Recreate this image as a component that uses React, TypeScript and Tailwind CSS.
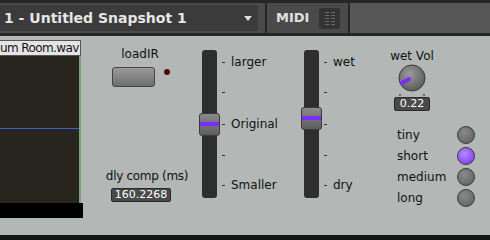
import React from "react";

const font = { fontFamily: '"DejaVu Sans", "Liberation Sans", sans-serif' };

function Slider({ thumbTop, labels }: { thumbTop: number; labels: string[] }) {
  const ticks = [12, 42, 74, 105, 135];
  return (
    <div className="relative h-[150px] w-[95px]">
      <div className="absolute left-[3px] top-0 h-[148px] w-[15px] rounded-[3px] bg-[#2e2e2e]" />
      <div
        className="absolute left-0 h-[23px] w-[21px] rounded-[3px] border border-[#3a3a3a] bg-gradient-to-b from-[#8a8a8a] to-[#5e5e5e]"
        style={{ top: thumbTop }}
      >
        <div className="mt-[8px] h-[4px] w-full bg-[#7b2cff]" />
      </div>
      {ticks.map((t, i) => (
        <React.Fragment key={t}>
          <div className="absolute left-[23px] h-[1px] w-[3px] bg-[#333]" style={{ top: t }} />
          {labels[i] && (
            <span className="absolute left-[32px] text-[12px] leading-none text-[#111]" style={{ top: t - 6 }}>
              {labels[i]}
            </span>
          )}
        </React.Fragment>
      ))}
    </div>
  );
}

export default function App() {
  const radios = ["tiny", "short", "medium", "long"];
  return (
    <div className="flex h-[240px] w-[490px] flex-col overflow-hidden bg-[#b3b8b7]" style={font}>
      {/* top bar */}
      <div className="flex h-[36px] border-t-[3px] border-b-[3px] border-[#262626] bg-[#4a4a4a]">
        <div className="my-[2px] ml-0 flex w-[258px] items-center justify-between rounded-r-[3px] bg-[#3b3b3b] pl-[4px] pr-[6px]">
          <span className="text-[14px] font-bold text-[#e6e6e6]">1 - Untitled Snapshot 1</span>
          <span className="border-x-[4px] border-t-[5px] border-x-transparent border-t-[#e0e0e0]" />
        </div>
        <div className="ml-[7px] w-[2px] bg-[#262626]" />
        <div className="flex w-[81px] items-center gap-[10px] pl-[9px]">
          <span className="text-[13px] font-bold text-[#e0e0e0]">MIDI</span>
          <div className="flex h-[21px] w-[21px] items-center justify-center gap-[2px] rounded-[3px] bg-[#333]">
            {[0, 1].map((c) => (
              <div key={c} className="flex flex-col gap-[2px]">
                {[0, 1, 2, 3, 4].map((r) => (
                  <div key={r} className="h-[1px] w-[4px] bg-[#6a6a6a]" />
                ))}
              </div>
            ))}
          </div>
        </div>
        <div className="w-[2px] bg-[#262626]" />
        <div className="flex-1 bg-[#575757]" />
      </div>

      {/* main */}
      <div className="flex flex-1 items-start">
        {/* left wave panel */}
        <div className="mt-[4px] flex w-[83px] flex-col">
          <div className="h-[16px] w-[81px] overflow-hidden whitespace-nowrap border-y border-r border-[#555] bg-[#e4e4e4] text-[12px] leading-[14px] tracking-[-0.6px] text-[#111]">
            um Room.wav
          </div>
          <div className="relative h-[147px] w-[81px] border-r-[2px] border-[#7aa27a] bg-[#28251f]">
            <div className="absolute left-0 top-[72px] h-[1px] w-full bg-[#3a5fd0]" />
          </div>
          <div className="h-[15px] w-[83px] bg-black" />
        </div>

        {/* load / delay column */}
        <div className="ml-[21px] flex w-[86px] flex-col items-center pt-[12px]">
          <span className="ml-[-14px] text-[12px] leading-none text-[#111]">loadIR</span>
          <div className="mt-[7px] flex items-center">
            <div className="ml-[-12px] h-[20px] w-[43px] rounded-[3px] border border-[#444] bg-gradient-to-b from-[#9a9a9a] to-[#6f6f6f]" />
            <div className="ml-[9px] mb-[10px] h-[6px] w-[6px] rounded-full bg-[#4a0d0d]" />
          </div>
          <span className="mt-[83px] whitespace-nowrap text-[12px] leading-none tracking-[-0.3px] text-[#111]">
            dly comp (ms)
          </span>
          <div className="mt-[6px] ml-[-12px] rounded-[2px] border border-[#2a2a2a] bg-[#4a4a4a] px-[3px] text-[11px] leading-[12px] text-white">
            160.2268
          </div>
        </div>

        {/* sliders */}
        <div className="ml-[9px] mt-[14px]">
          <Slider thumbTop={63} labels={["larger", "", "Original", "", "Smaller"]} />
        </div>
        <div className="ml-[7px] mt-[14px]">
          <Slider thumbTop={57} labels={["wet", "", "", "", "dry"]} />
        </div>

        {/* knob + radios */}
        <div className="ml-[-14px] flex flex-col pt-[14px]">
          <div className="ml-[5px] flex w-[50px] flex-col items-center">
            <span className="text-[12px] leading-none text-[#111]">wet Vol</span>
            <svg width="34" height="34" viewBox="0 0 34 34" className="mt-[1px]">
              <defs>
                <radialGradient id="kg" cx="0.4" cy="0.35" r="0.7">
                  <stop offset="0" stopColor="#9a9a9a" />
                  <stop offset="1" stopColor="#5a5a5a" />
                </radialGradient>
              </defs>
              <circle cx="17" cy="15" r="13" fill="url(#kg)" stroke="#3a3a3a" strokeWidth="1" />
              <line x1="14" y1="16" x2="7" y2="20" stroke="#7b2cff" strokeWidth="4" strokeLinecap="round" />
              <circle cx="5" cy="32" r="1" fill="#555" />
              <circle cx="29" cy="32" r="1" fill="#555" />
            </svg>
            <div className="rounded-[2px] border border-[#2a2a2a] bg-[#4a4a4a] px-[5px] text-[11px] leading-[12px] text-white">
              0.22
            </div>
          </div>
          <div className="mt-[14px] flex flex-col gap-[1px] pl-[15px]">
            {radios.map((r) => (
              <div key={r} className="flex h-[20px] items-center">
                <span className="w-[60px] text-[12px] text-[#111]">{r}</span>
                <div
                  className={`h-[18px] w-[18px] rounded-full border border-[#3a3a3a] ${
                    r === "short"
                      ? "bg-[radial-gradient(circle_at_40%_35%,#b58aff,#7b2cff)]"
                      : "bg-[radial-gradient(circle_at_40%_35%,#8a8a8a,#5c5c5c)]"
                  }`}
                />
              </div>
            ))}
          </div>
        </div>
      </div>
      <div className="h-[5px] bg-[#141414]" />
    </div>
  );
}
